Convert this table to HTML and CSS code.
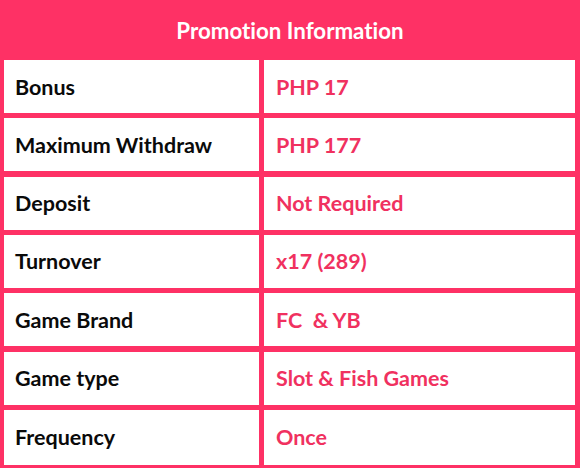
FILE: index.html
```html
<!DOCTYPE html>
<html>
<head>
<meta charset="utf-8">
<link rel="stylesheet" href="styles.css">
</head>
<body>
<div class="promo">
  <div class="promo-title">Promotion Information</div>
  <div class="promo-grid">
    <div class="cell label">Bonus</div><div class="cell value">PHP 17</div>
    <div class="cell label">Maximum Withdraw</div><div class="cell value">PHP 177</div>
    <div class="cell label">Deposit</div><div class="cell value">Not Required</div>
    <div class="cell label">Turnover</div><div class="cell value">x17 (289)</div>
    <div class="cell label">Game Brand</div><div class="cell value">FC &nbsp;&amp; YB</div>
    <div class="cell label">Game type</div><div class="cell value">Slot &amp; Fish Games</div>
    <div class="cell label">Frequency</div><div class="cell value">Once</div>
  </div>
</div>
</body>
</html>
```

FILE: styles.css
```css
html, body {
  margin: 0;
  padding: 0;
  background: #fe3165;
}
body {
  font-family: Lato, "Noto Sans", sans-serif;
  font-weight: 700;
  font-variant-ligatures: none;
  width: 580px;
  height: 468px;
  overflow: hidden;
}
.promo {
  display: flex;
  flex-direction: column;
}
.promo-title {
  height: 60px;
  display: flex;
  align-items: center;
  justify-content: center;
  color: #ffffff;
  font-size: 22.3px;
  padding-top: 1px;
  box-sizing: border-box;
}
.promo-grid {
  display: grid;
  grid-template-columns: 255px 311px;
  grid-auto-rows: 53px;
  column-gap: 5px;
  row-gap: 5.33px;
  padding-left: 4px;
}
.cell {
  background: #ffffff;
  display: flex;
  align-items: center;
  font-size: 21.5px;
}
.label {
  color: #0a0a0a;
  padding-left: 11px;
}
.value {
  color: #f0315f;
  padding-left: 12px;
}
.promo-grid .cell:nth-last-child(-n+2) {
  height: 55px;
}
```
